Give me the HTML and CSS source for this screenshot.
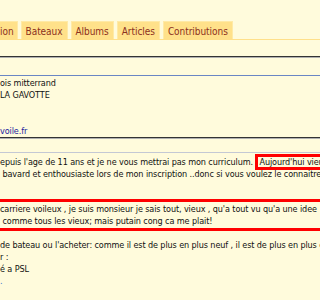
FILE: index.html
```html
<!DOCTYPE html>
<html lang="fr">
<head>
    <meta charset="UTF-8">
    <title>Profil</title>
    <link rel="stylesheet" href="styles.css">
</head>
<body>
    <div class="tabs">
        <a class="tab tab-first" href="#">ion</a>
        <a class="tab" href="#">Bateaux</a>
        <a class="tab" href="#">Albums</a>
        <a class="tab" href="#">Articles</a>
        <a class="tab" href="#">Contributions</a>
    </div>

    <hr class="rule">

    <div class="card">
        <div class="line">ois mitterrand</div>
        <div class="line">LA GAVOTTE</div>
        <div class="line mail"><a href="#">voile.fr</a></div>
    </div>

    <hr class="rule rule-tight">

    <div class="post">
        <p class="text">epuis l'age de 11 ans et je ne vous mettrai pas mon curriculum. <span class="mark">Aujourd'hui vieux</span><br>&nbsp;bavard et enthousiaste lors de mon inscription ..donc si vous voulez le connaitre</p>
        <div class="boxed">carriere voileux , je suis monsieur je sais tout, vieux , qu'a tout vu qu'a une idee<br>&nbsp;comme tous les vieux; mais putain cong ca me plait!</div>
        <p class="text">de bateau ou l'acheter: comme il est de plus en plus neuf , il est de plus en plus cher<br>r :<br>é a PSL<br><a class="more" href="#">.</a></p>
    </div>
</body>
</html>
```

FILE: styles.css
```css
body {
    margin: 0;
    background-color: #fffbdc;
    color: #111;
    font-family: "DejaVu Sans Condensed", "DejaVu Sans", sans-serif;
    font-size: 9px;
    letter-spacing: -0.1px;
    line-height: 12px;
    white-space: nowrap;
    overflow: hidden;
}

a {
    color: #1a1aa0;
    text-decoration: none;
}

.tabs {
    display: flex;
    gap: 3px;
    margin-top: 21px;
    border-bottom: 1px solid #ffe08a;
    height: 18px;
}

.tab {
    display: block;
    padding: 3px 4px 0;
    background-color: #ffe18a;
    border: 1px solid #ffeaa6;
    border-bottom: none;
    color: #8c3020;
    font-size: 10px;
    letter-spacing: -0.05px;
    line-height: 14px;
}

.tab-first {
    margin-left: -5px;
    padding-right: 3px;
}

.rule {
    margin: 16px 0 0;
    border: none;
    border-top: 1px solid #333;
    border-bottom: 1px solid #b0b0b0;
    height: 0;
}

.rule-tight {
    margin-top: 0;
}

.card {
    margin-top: 17px;
    border-top: 1px solid #6a86c4;
    padding-top: 1px;
}

.mail {
    margin-top: 24px;
}

.post {
    margin-top: 13px;
    border-top: 1px solid #c4c8d4;
    padding-top: 3px;
}

.text {
    margin: 0;
}

.mark {
    border: 3px solid #f00;
    padding: 0 1px;
}

.boxed {
    margin-top: 19px;
    border-top: 3px solid #f00;
    border-bottom: 3px solid #f00;
    padding: 1px 0;
}

.boxed + .text {
    margin-top: 8px;
}

.more {
    color: #3a7ad0;
}
```
